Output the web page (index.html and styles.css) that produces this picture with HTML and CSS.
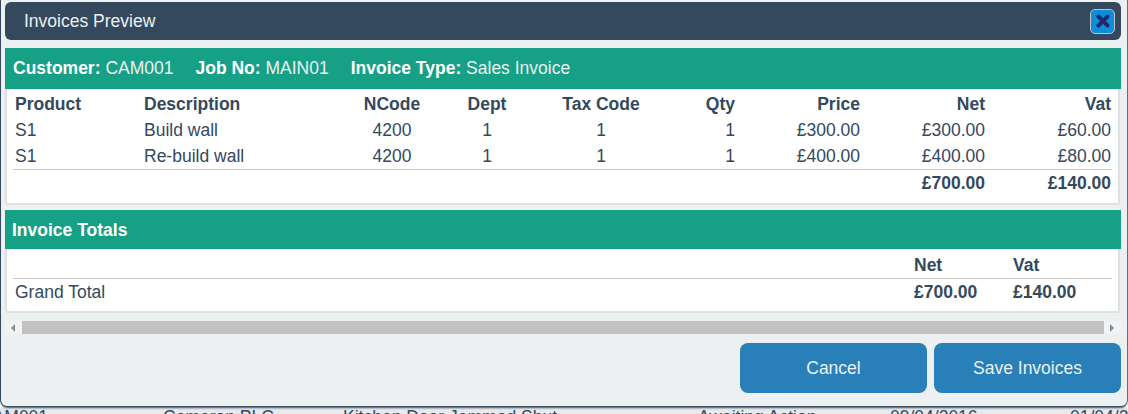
FILE: index.html
```
<!DOCTYPE html>
<html>
	<head>
		<meta charset="utf-8" />
		<title>Invoices Preview</title>
		<link rel="stylesheet" href="styles.css">
	</head>
	<body>
		<div class="dialog">
			<div class="title-bar">
				<span>Invoices Preview</span>
				<button class="close-btn" type="button" aria-label="Close">
					<svg width="14" height="14" viewBox="0 0 14 14"><path d="M2.5 2.5 11.5 11.5M11.5 2.5 2.5 11.5" stroke="#1f2a6b" stroke-width="4" stroke-linecap="round" fill="none"/></svg>
				</button>
			</div>

			<div class="panel panel-lines">
				<div class="panel-head">
					<span><b>Customer:</b> CAM001</span>
					<span><b>Job No:</b> MAIN01</span>
					<span><b>Invoice Type:</b> Sales Invoice</span>
				</div>
				<div class="panel-body">
					<table class="lines">
						<colgroup>
							<col class="c-product"><col class="c-desc"><col class="c-ncode"><col class="c-dept"><col class="c-tax"><col class="c-qty"><col class="c-money"><col class="c-money"><col class="c-money">
						</colgroup>
						<thead>
							<tr>
								<th>Product</th><th>Description</th><th class="mid">NCode</th><th class="mid">Dept</th><th class="mid">Tax Code</th><th class="num">Qty</th><th class="num">Price</th><th class="num">Net</th><th class="num">Vat</th>
							</tr>
						</thead>
						<tbody>
							<tr>
								<td>S1</td><td>Build wall</td><td class="mid">4200</td><td class="mid">1</td><td class="mid">1</td><td class="num">1</td><td class="num">£300.00</td><td class="num">£300.00</td><td class="num">£60.00</td>
							</tr>
							<tr>
								<td>S1</td><td>Re-build wall</td><td class="mid">4200</td><td class="mid">1</td><td class="mid">1</td><td class="num">1</td><td class="num">£400.00</td><td class="num">£400.00</td><td class="num">£80.00</td>
							</tr>
							<tr class="sum">
								<td colspan="7"></td><td class="num">£700.00</td><td class="num">£140.00</td>
							</tr>
						</tbody>
					</table>
				</div>
			</div>

			<div class="panel panel-totals">
				<div class="panel-head"><b>Invoice Totals</b></div>
				<div class="panel-body">
					<table class="totals">
						<colgroup>
							<col><col class="c-tnet"><col class="c-tvat">
						</colgroup>
						<thead>
							<tr><th></th><th>Net</th><th>Vat</th></tr>
						</thead>
						<tbody>
							<tr><td>Grand Total</td><td class="strong">£700.00</td><td class="strong">£140.00</td></tr>
						</tbody>
					</table>
				</div>
			</div>

			<div class="scrollbar">
				<span class="arrow arrow-left"></span>
				<div class="thumb"></div>
				<span class="arrow arrow-right"></span>
			</div>

			<div class="actions">
				<button class="btn" type="button">Cancel</button>
				<button class="btn" type="button">Save Invoices</button>
			</div>
		</div>

		<div class="behind">
			<span class="cell cell-ref">CAM001</span>
			<span class="cell cell-name">Cameron PLC</span>
			<span class="cell cell-job">Kitchen Door Jammed Shut</span>
			<span class="cell cell-status">Awaiting Action</span>
			<span class="cell cell-date">09/04/2016</span>
			<span class="cell cell-date2">01/04/2016</span>
		</div>
	</body>
</html>
```

FILE: styles.css
```
html, body {
	margin: 0;
	height: 100%;
	overflow: hidden;
}
body {
	width: 1128px;
	height: 414px;
	background: #fff;
	font-family: "Liberation Sans", Arial, sans-serif;
	font-size: 17.5px;
	color: #34495e;
}
.dialog {
	box-sizing: border-box;
	position: relative;
	width: 1126px;
	height: 406px;
	margin-left: 1px;
	padding: 2px 6px 0 4px;
	background: #ecf0f1;
	border-radius: 0 0 6px 6px;
	box-shadow: -1px 0 0 #34495e, 1px 0 0 #5d7286, 0 2px 2px #34495e;
}
.title-bar {
	display: flex;
	align-items: center;
	justify-content: space-between;
	height: 38px;
	padding: 0 6px 0 19px;
	background: #34495e;
	color: #ecf0f1;
	border-radius: 6px;
}
.close-btn {
	display: flex;
	align-items: center;
	justify-content: center;
	box-sizing: border-box;
	width: 25px;
	height: 25px;
	padding: 0;
	background: #0d8edb;
	border: 1px solid #bdc3c7;
	border-radius: 5px;
}
.panel {
	margin-top: 8px;
}
.panel-head {
	display: flex;
	align-items: center;
	gap: 22px;
	box-sizing: border-box;
	height: 41px;
	padding-left: 8px;
	background: #16a085;
	color: #ecf0f1;
}
.panel-head b { color: #fff; }
.panel-body {
	margin-right: 1px;
	padding: 2px 6px 0 6px;
	background: #fff;
	border: 2px solid #dde1e2;
	border-top: 0;
	border-radius: 0 0 3px 3px;
}
.panel-lines .panel-body { height: 112px; }
.panel-totals { margin-top: 5px; }
.panel-totals .panel-head {
	height: 39px;
	padding: 2px 0 0 7px;
}
.panel-totals .panel-body {
	height: 62px;
	padding-top: 0;
}
table {
	width: 1099px;
	border-collapse: collapse;
	table-layout: fixed;
}
th, td {
	padding: 0 2px;
	text-align: left;
	white-space: nowrap;
	overflow: hidden;
}
th { font-weight: 700; }
.mid { text-align: center; }
.num { text-align: right; }
.num:last-child { padding-right: 1px; }
.strong { font-weight: 700; }
.lines th, .lines td { height: 26px; }
.lines .sum td {
	border-top: 1px solid #c8c8c8;
	font-weight: 700;
}
.c-product { width: 129px; }
.c-desc { width: 198px; }
.c-ncode { width: 104px; }
.c-dept { width: 86px; }
.c-tax { width: 142px; }
.c-qty { width: 65px; }
.c-money { width: 125px; }
.totals th {
	height: 26px;
	padding-top: 3px;
	border-bottom: 1px solid #c8c8c8;
}
.totals td { height: 27px; }
.c-tnet { width: 99px; }
.c-tvat { width: 101px; }
.scrollbar {
	display: flex;
	align-items: center;
	height: 13px;
	margin-top: 8px;
	background: #f1f3f4;
}
.thumb {
	flex: 1;
	height: 13px;
	background: #c1c1c1;
}
.arrow {
	flex: none;
	box-sizing: border-box;
	width: 0;
	height: 0;
	border: 0 solid transparent;
}
.arrow-left {
	margin: 0 7px 0 6px;
	border-width: 4px 4px 4px 0;
	border-right-color: #8a8a8a;
}
.arrow-right {
	margin: 0 7px 0 6px;
	border-width: 4px 0 4px 4px;
	border-left-color: #8a8a8a;
}
.actions {
	display: flex;
	justify-content: flex-end;
	gap: 7px;
	margin-top: 9px;
}
.btn {
	width: 187px;
	height: 50px;
	padding: 0;
	background: #2980b9;
	border: 0;
	border-radius: 8px;
	color: #ecf0f1;
	font-family: inherit;
	font-size: 17.5px;
}
.behind {
	display: flex;
	height: 6px;
	overflow: hidden;
	line-height: 18px;
	margin-top: 2px;
	background: #e9e9e9;
	white-space: nowrap;
}
.cell {
	display: block;
	flex: none;
}
.cell-ref { width: 183px; margin-left: -20px; }
.cell-name { width: 180px; }
.cell-job { width: 355px; }
.cell-status { width: 192px; }
.cell-date { width: 180px; }
```
